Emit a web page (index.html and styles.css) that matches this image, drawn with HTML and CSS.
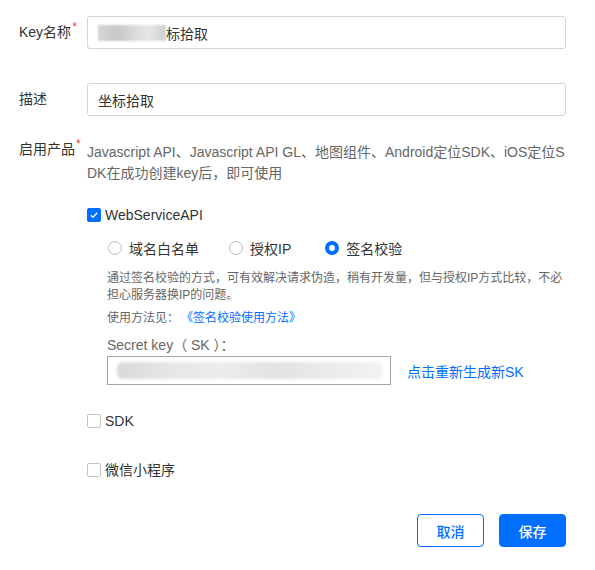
FILE: index.html
```html
<!DOCTYPE html>
<html lang="zh">
<head>
<meta charset="utf-8">
<link rel="stylesheet" href="styles.css">
</head>
<body>
<div class="form">
  <div class="row">
    <div class="label">Key名称<span class="req">*</span></div>
    <div class="input"><span class="blur-a"></span><span class="val">标拾取</span></div>
  </div>
  <div class="row row-gap">
    <div class="label">描述</div>
    <div class="input"><span class="val">坐标拾取</span></div>
  </div>
  <div class="row row-products">
    <div class="label label-top">启用产品<span class="req">*</span></div>
    <div class="content">
      <div class="desc">
        <div class="line">Javascript API、Javascript API GL、地图组件、Android定位SDK、iOS定位S</div>
        <div class="line">DK在成功创建key后，即可使用</div>
      </div>
      <label class="check check-ws"><span class="box checked"><svg viewBox="0 0 14 14" width="14" height="14"><path d="M3.2 7.2 L5.8 9.6 L10.8 4.4" fill="none" stroke="#fff" stroke-width="1.5"/></svg></span><span class="ctext">WebServiceAPI</span></label>
      <div class="sub">
        <div class="radios">
          <span class="radio"><span class="circle"></span><span class="rtext">域名白名单</span></span>
          <span class="radio"><span class="circle"></span><span class="rtext">授权IP</span></span>
          <span class="radio"><span class="circle on"></span><span class="rtext">签名校验</span></span>
        </div>
        <div class="note">通过签名校验的方式，可有效解决请求伪造，稍有开发量，但与授权IP方式比较，不必<br>担心服务器换IP的问题。</div>
        <div class="note note-use">使用方法见：<a class="link">《签名校验使用方法》</a></div>
        <div class="sk-label">Secret key（ SK ）：</div>
        <div class="sk-row">
          <div class="sk-input"><span class="blur-b"></span></div>
          <a class="regen">点击重新生成新SK</a>
        </div>
      </div>
      <label class="check check-sdk"><span class="box"></span><span class="ctext">SDK</span></label>
      <label class="check check-wx"><span class="box"></span><span class="ctext">微信小程序</span></label>
    </div>
  </div>
  <div class="actions">
    <button class="btn btn-cancel">取消</button>
    <button class="btn btn-save">保存</button>
  </div>
</div>
</body>
</html>
```
FILE: styles.css
```css
* { box-sizing: border-box; }
html, body { margin: 0; padding: 0; background: #fff; }
body {
  font-family: "Liberation Sans", "Noto Sans CJK SC", sans-serif;
  font-size: 14px;
  color: #333;
}
.form { padding: 16px 29px 0 19px; }
.row { display: flex; align-items: flex-start; }
.row-gap { margin-top: 33px; }
.row-products { margin-top: 26px; }
.label {
  width: 68px;
  flex-shrink: 0;
  line-height: 33px;
  color: #333;
  white-space: nowrap;
}
.label-top { line-height: 21px; margin-top: -3px; }
.req { color: #e54545; font-size: 12px; position: relative; top: -6px; margin-left: 1px; }
.input {
  flex: 1;
  height: 33px;
  border: 1px solid #d5d5d5;
  border-radius: 3px;
  display: flex;
  align-items: center;
  padding-left: 10px;
  color: #333;
}
.blur-a {
  display: inline-block;
  width: 68px;
  height: 16px;
  background: linear-gradient(90deg, #d4d4d4 0%, #c8c8c8 30%, #dcdcdc 55%, #e6e6e6 75%, #cfcfcf 100%);
  filter: blur(1px);
}
.content { flex: 1; }
.desc { color: #666; line-height: 21px; }
.line { white-space: nowrap; }
.check { display: flex; align-items: center; height: 20px; color: #333; }
.check-ws { margin-top: 21px; }
.check-sdk { margin-top: 26px; }
.check-wx { margin-top: 29px; }
.box {
  width: 14px; height: 14px;
  border: 1px solid #c4c4c4;
  border-radius: 2px;
  margin-right: 4px;
  display: inline-flex;
  align-items: center; justify-content: center;
  background: #fff;
}
.box.checked { background: #006eff; border-color: #006eff; }
.box svg { display: block; }
.ctext { line-height: 20px; }
.sub { padding-left: 20px; }
.radios { display: flex; margin-top: 13px; height: 20px; align-items: center; padding-left: 1px; }
.radio { display: flex; align-items: center; margin-right: 30px; }
.radio:nth-child(2) { margin-right: 34px; }
.circle {
  width: 14px; height: 14px;
  border: 1px solid #bdbdbd;
  border-radius: 50%;
  margin-right: 7px;
  background: #fff;
}
.circle.on { border: 4px solid #006eff; }
.rtext { color: #333; }
.note { font-size: 12px; line-height: 17px; color: #666; margin-top: 12px; white-space: nowrap; }
.note-use { margin-top: 6px; }
.link { color: #006eff; margin-left: 8px; }
.sk-label { margin-top: 8px; line-height: 20px; color: #666; white-space: nowrap; }
.sk-row { display: flex; align-items: center; margin-top: 1px; }
.sk-input {
  width: 284px; height: 29px;
  border: 1px solid #a6a6a6;
  display: flex; align-items: center;
  padding-left: 9px;
}
.blur-b {
  display: block;
  width: 266px; height: 17px;
  background: linear-gradient(90deg, #d9d9d9 0%, #e6e6e6 20%, #ececec 40%, #e2e2e2 60%, #ebebeb 80%, #f2f2f2 100%);
  filter: blur(1.5px);
  border-radius: 6px;
}
.regen { color: #006eff; margin-left: 16px; }
.actions { display: flex; justify-content: flex-end; gap: 15px; margin-top: 34px; }
.btn {
  width: 67px; height: 33px;
  border-radius: 4px;
  font-family: "Liberation Sans", "Noto Sans CJK SC", sans-serif;
  font-size: 14px;
  font-weight: 500;
  cursor: pointer;
}
.btn-cancel { background: #fff; border: 1px solid #006eff; color: #006eff; }
.btn-save { background: #006eff; border: 1px solid #006eff; color: #fff; }
```
